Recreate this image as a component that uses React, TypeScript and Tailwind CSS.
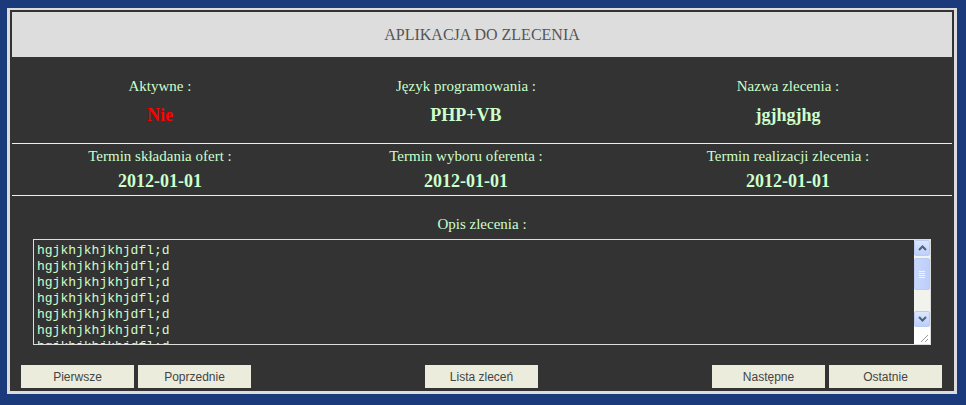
const serif = "font-['Liberation_Serif','Times_New_Roman',serif]";

const Field = ({
  label,
  value,
  valueClass = "text-[#ccffcc]",
}: {
  label: string;
  value: string;
  valueClass?: string;
}) => (
  <div className="flex flex-col items-center">
    <span className="text-[15px] leading-[17px] text-[#ccffcc]">{label}</span>
    <span className={`text-[18px] leading-[22px] font-bold ${valueClass}`}>
      {value}
    </span>
  </div>
);

const Btn = ({ label }: { label: string }) => (
  <button className="w-[113px] h-[23px] bg-[#ececdc] text-[#444] text-[12px] font-['Liberation_Sans',Arial,sans-serif] flex items-center justify-center">
    {label}
  </button>
);

const ArrowBtn = ({ up }: { up?: boolean }) => (
  <div className="h-[16px] w-full rounded-[2px] border border-[#b8cbf5] bg-gradient-to-b from-[#dde7fd] to-[#bccffa] flex items-center justify-center">
    <svg width="9" height="6" viewBox="0 0 9 6">
      <path
        d={up ? "M1 5 L4.5 1.5 L8 5" : "M1 1 L4.5 4.5 L8 1"}
        fill="none"
        stroke="#4d6185"
        strokeWidth="2"
      />
    </svg>
  </div>
);

const Scrollbar = () => (
  <div className="w-[16px] h-full flex flex-col bg-[#f3f3ee]">
    <ArrowBtn up />
    <div className="mt-[2px] h-[32px] rounded-[2px] border border-[#b8cbf5] bg-gradient-to-r from-[#c9d8fc] to-[#bccffa] flex flex-col items-center justify-center gap-[1px]">
      {[0, 1, 2, 3].map((i) => (
        <div key={i} className="w-[6px] h-[1px] bg-[#eef3fe]" />
      ))}
    </div>
    <div className="flex-1" />
    <ArrowBtn />
    <div className="h-[17px] bg-white flex items-end justify-end p-[1px]">
      <svg width="9" height="9" viewBox="0 0 9 9">
        <path d="M8 1 L1 8 M8 5 L5 8" stroke="#999" strokeWidth="1" />
      </svg>
    </div>
  </div>
);

export default function App() {
  const lines = Array.from({ length: 7 }, () => "hgjkhjkhjkhjdfl;d");

  return (
    <div className={`w-[966px] h-[405px] bg-[#1a3a7b] pt-[8px] pl-[7px] ${serif}`}>
      <div className="w-[950px] h-[386px] border-[#dcdcdc] border-x-[3px] border-t-2 border-b-[3px] bg-[#333333] px-[2px] pt-[2px] flex flex-col">
        <div className="h-[45px] bg-[#dddddd] flex items-center justify-center text-[16px] text-[#555]">
          APLIKACJA DO ZLECENIA
        </div>

        {/* aktywne / język / nazwa */}
        <div className="h-[87px] border-b border-[#eeeeee] grid grid-cols-[296px_316px_328px] pt-[21px] content-start [&>div]:gap-[9px]">
          <Field label="Aktywne :" value="Nie" valueClass="text-[#ff0000]" />
          <Field label="Język programowania :" value="PHP+VB" />
          <Field label="Nazwa zlecenia :" value="jgjhgjhg" />
        </div>

        {/* terminy */}
        <div className="h-[52px] border-b border-[#eeeeee] grid grid-cols-[296px_316px_328px] pt-[4px] content-start [&>div]:gap-[5px]">
          <Field label="Termin składania ofert :" value="2012-01-01" />
          <Field label="Termin wyboru oferenta :" value="2012-01-01" />
          <Field label="Termin realizacji zlecenia :" value="2012-01-01" />
        </div>

        <div className="flex flex-col items-center pt-[20px]">
          <span className="text-[15px] leading-[17px] text-[#ccffcc]">Opis zlecenia :</span>
          <div className="mt-[6px] w-[898px] h-[106px] border border-[#dddddd] flex">
            <div className="flex-1 overflow-hidden pl-[3px] pt-[3px] font-['Liberation_Mono','Courier_New',monospace] text-[13px] leading-[16px] text-[#ccffcc] whitespace-pre">
              {lines.map((l, i) => (
                <div key={i}>{l}</div>
              ))}
            </div>
            <Scrollbar />
          </div>
        </div>

        <div className="mt-[20px] flex items-center justify-between pl-[9px] pr-[10px]">
          <div className="flex gap-[4px]">
            <Btn label="Pierwsze" />
            <Btn label="Poprzednie" />
          </div>
          <Btn label="Lista zleceń" />
          <div className="flex gap-[4px]">
            <Btn label="Następne" />
            <Btn label="Ostatnie" />
          </div>
        </div>
      </div>
    </div>
  );
}
